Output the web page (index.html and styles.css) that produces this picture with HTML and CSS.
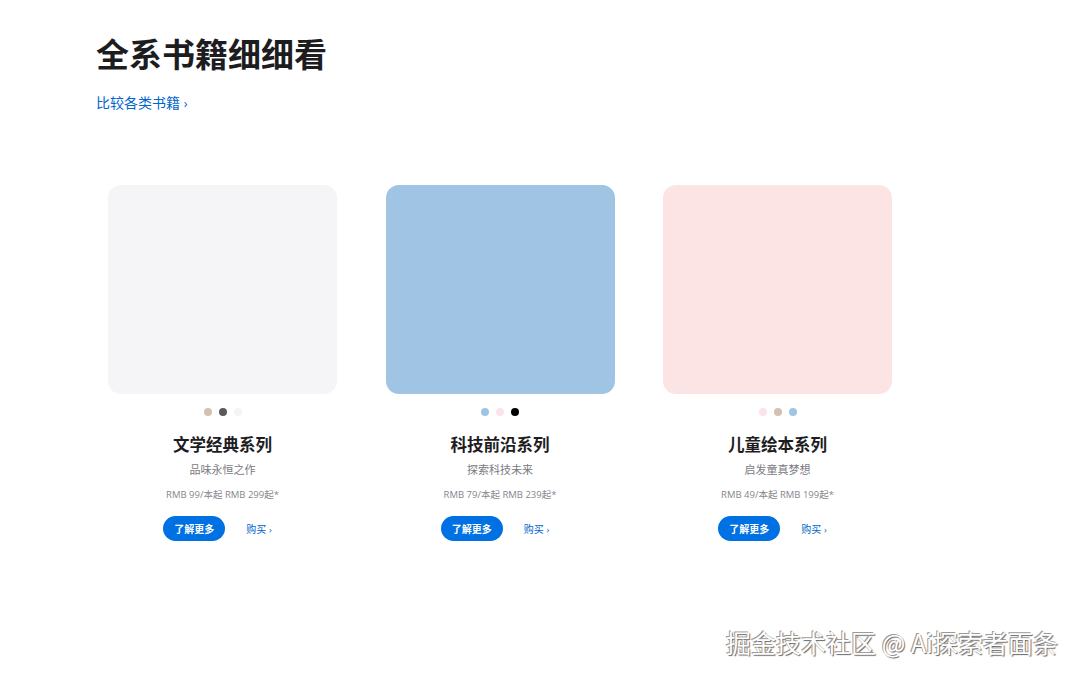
FILE: index.html
```html
<!DOCTYPE html>
<html lang="zh-CN">
<head>
<meta charset="utf-8">
<title>全系书籍细细看</title>
<link rel="stylesheet" href="styles.css">
</head>
<body>
<main class="page">
  <header class="head">
    <h1 class="title">全系书籍细细看</h1>
    <a class="compare" href="#">比较各类书籍 <span class="chev">›</span></a>
  </header>
  <section class="grid">
    <article class="card">
      <div class="cover cover-lit"></div>
      <div class="dots">
        <span class="dot tan"></span><span class="dot gray"></span><span class="dot white"></span>
      </div>
      <h2 class="name">文学经典系列</h2>
      <p class="desc">品味永恒之作</p>
      <p class="price">RMB 99/本起 RMB 299起*</p>
      <div class="actions">
        <a class="btn" href="#">了解更多</a>
        <a class="buy" href="#">购买 <span class="chev">›</span></a>
      </div>
    </article>
    <article class="card">
      <div class="cover cover-tech"></div>
      <div class="dots">
        <span class="dot blue"></span><span class="dot pink"></span><span class="dot black"></span>
      </div>
      <h2 class="name">科技前沿系列</h2>
      <p class="desc">探索科技未来</p>
      <p class="price">RMB 79/本起 RMB 239起*</p>
      <div class="actions">
        <a class="btn" href="#">了解更多</a>
        <a class="buy" href="#">购买 <span class="chev">›</span></a>
      </div>
    </article>
    <article class="card">
      <div class="cover cover-kids"></div>
      <div class="dots">
        <span class="dot pink"></span><span class="dot tan"></span><span class="dot blue"></span>
      </div>
      <h2 class="name">儿童绘本系列</h2>
      <p class="desc">启发童真梦想</p>
      <p class="price">RMB 49/本起 RMB 199起*</p>
      <div class="actions">
        <a class="btn" href="#">了解更多</a>
        <a class="buy" href="#">购买 <span class="chev">›</span></a>
      </div>
    </article>
  </section>
  <footer class="mark">掘金技术社区 @ Ai探索者面条</footer>
</main>
</body>
</html>
```

FILE: styles.css
```css
* { box-sizing: border-box; }
html, body { margin: 0; padding: 0; background: #fff; }
body {
  font-family: "Open Sans", "Noto Sans CJK SC", sans-serif;
  color: #1d1d1f;
  width: 1080px;
  height: 678px;
  overflow: hidden;
}
.page {
  padding: 33px 0 0 96px;
  height: 678px;
  display: flex;
  flex-direction: column;
}
.head { display: flex; flex-direction: column; align-items: flex-start; }
.title {
  margin: 0;
  font-size: 33px;
  line-height: 44px;
  font-weight: 700;
  color: #1d1d1f;
}
.compare {
  margin-top: 15px;
  font-size: 14px;
  line-height: 22px;
  color: #0066cc;
  text-decoration: none;
}
.chev { font-size: 0.9em; }
.grid {
  margin-top: 70px;
  display: grid;
  grid-template-columns: repeat(3, 253px);
  column-gap: 24.5px;
}
.card {
  padding: 0 12px;
  display: flex;
  flex-direction: column;
  align-items: center;
}
.cover {
  width: 229px;
  height: 209px;
  border-radius: 13px;
}
.cover-lit { background: #f5f5f7; }
.cover-tech { background: #a0c4e3; }
.cover-kids { background: #fde4e4; }
.dots {
  margin-top: 14px;
  display: flex;
  gap: 7px;
}
.dot {
  width: 8px;
  height: 8px;
  border-radius: 50%;
}
.tan { background: #d6c0b0; }
.gray { background: #5a5a5c; }
.white { background: #f5f5f7; }
.blue { background: #a0c4e3; }
.pink { background: #fbe3e7; }
.black { background: #000; }
.name {
  margin: 17px 0 0;
  font-size: 16.5px;
  line-height: 24px;
  font-weight: 700;
  color: #1d1d1f;
}
.desc {
  margin: 4px 0 0;
  font-size: 11px;
  line-height: 18px;
  color: #7a7a7f;
}
.price {
  margin: 9px 0 0;
  font-size: 9.5px;
  line-height: 14px;
  color: #86868b;
}
.actions {
  margin-top: 14px;
  margin-right: 10px;
  display: flex;
  align-items: center;
  gap: 21px;
}
.btn {
  display: flex;
  align-items: center;
  justify-content: center;
  width: 62px;
  height: 25px;
  border-radius: 13px;
  background: #0071e3;
  color: #fff;
  font-size: 10px;
  font-weight: 700;
  text-decoration: none;
}
.buy {
  font-size: 10px;
  color: #0066cc;
  text-decoration: none;
}
.mark {
  margin-top: auto;
  margin-bottom: 20px;
  align-self: flex-end;
  margin-right: 22px;
  font-family: "Noto Sans CJK SC", sans-serif;
  font-size: 25px;
  line-height: 32px;
  color: #fff;
  text-shadow: -1px -1px 0 #9a9a9a, 1px 1px 1px #666;
}
```
